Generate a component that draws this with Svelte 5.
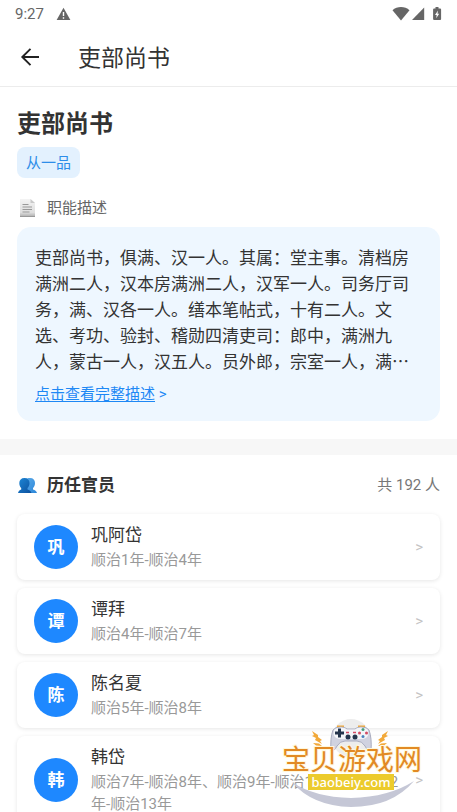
<script>
  const officials = [
    { name: '巩阿岱', term: '顺治1年-顺治4年' },
    { name: '谭拜', term: '顺治4年-顺治7年' },
    { name: '陈名夏', term: '顺治5年-顺治8年' },
    { name: '韩岱', term: '顺治7年-顺治8年、顺治9年-顺治10年、顺治12年-顺治13年' }
  ];
</script>

<div class="screen">
  <div class="status">
    <span>9:27</span>
    <svg width="15" height="14" viewBox="0 0 15 14" aria-hidden="true">
      <path d="M7.5 .8 14.4 13H.6z" fill="#666" />
      <path d="M7.5 5v4M7.5 10.3v1.5" stroke="#fff" stroke-width="1.4" />
    </svg>
    <svg class="radio" width="52" height="16" viewBox="0 0 52 16" aria-hidden="true">
      <path d="M.5 4.2C5-.2 13-.2 17.5 4.2L9 14.5z" fill="#666" />
      <path d="M32.2 1.6v12.4H20z" fill="#666" />
      <path d="M43.5 1h3v1.6h1.6q1 0 1 1V13q0 1-1 1h-6q-1 0-1-1V3.600q0-1 1-1h1.400z" fill="#666" />
      <path d="M46 4.400 43 9h1.700l-.5 3.200L47.200 7.700h-1.700z" fill="#fff" />
    </svg>
  </div>

  <header>
    <button class="back" aria-label="返回">
      <svg width="20" height="20" viewBox="0 0 20 20" fill="none" stroke="#222" stroke-width="1.9" aria-hidden="true">
        <path d="M19 10H2.500M10.500 1.800 2.300 10l8.200 8.200" />
      </svg>
    </button>
    <span class="bar-title">吏部尚书</span>
  </header>

  <main>
    <section class="office">
      <h1>吏部尚书</h1>
      <span class="rank">从一品</span>
      <h2 class="label">
        <svg width="20" height="20" viewBox="0 0 20 20" aria-hidden="true">
          <defs>
            <linearGradient id="sheet" x1="0" y1="0" x2="0" y2="1">
              <stop offset="0" stop-color="#f4f4f4" />
              <stop offset=".75" stop-color="#dedede" />
              <stop offset="1" stop-color="#aaa" />
            </linearGradient>
          </defs>
          <path d="M3 1h10.500L18 5v14H3z" fill="url(#sheet)" />
          <path d="M13.500 1v4H18z" fill="#c9c9c9" />
          <path d="M5.500 6.500h6M5.500 9h9.500M5.500 11.500h9.500M5.500 14h7" stroke="#999" />
          <path d="M3 18.500h15" stroke="#999" />
        </svg>
        职能描述
      </h2>
      <div class="summary">
        <p>吏部尚书，俱满、汉一人。其属：堂主事。清档房满洲二人，汉本房满洲二人，汉军一人。司务厅司务，满、汉各一人。缮本笔帖式，十有二人。文选、考功、验封、稽勋四清吏司：郎中，满洲九人，蒙古一人，汉五人。员外郎，宗室一人，满…</p>
        <a href="#full"><span>点击查看完整描述</span> &gt;</a>
      </div>
    </section>

    <section class="history">
      <div class="history-head">
        <h2>
          <svg width="20" height="20" viewBox="0 0 20 20" aria-hidden="true">
            <defs>
              <linearGradient id="front" x1="0" y1="0" x2="1" y2="1">
                <stop offset="0" stop-color="#1e88d8" />
                <stop offset="1" stop-color="#0c4f9c" />
              </linearGradient>
              <linearGradient id="rear" x1="0" y1="0" x2="1" y2="1">
                <stop offset="0" stop-color="#5baae8" />
                <stop offset="1" stop-color="#2b86d9" />
              </linearGradient>
            </defs>
            <path d="M13 3c3.300 0 5 2 5 5 0 2.500-1 4-2 5v1.500c2 .5 3.500 1.500 4 3.500H8V5c1-1.400 3-2 5-2z" fill="url(#rear)" />
            <path d="M7.500 3c3.200 0 5 2 5 5 0 2.500-1 4-2 5v1.500c2 .5 3.500 1.500 4 3.500H1c.5-2 1.500-3 3.200-3.500V13c-1-1-1.900-2.500-1.900-5 0-3 1.900-5 5.200-5z" fill="url(#front)" />
          </svg>
          历任官员
        </h2>
        <span class="count">共 192 人</span>
      </div>
      <ul>
        {#each officials as o}
          <li>
            <button class="card">
              <span class="avatar">{o.name[0]}</span>
              <span class="info">
                <span class="name">{o.name}</span>
                <span class="term">{o.term}</span>
              </span>
              <span class="chevron">&gt;</span>
            </button>
          </li>
        {/each}
      </ul>
    </section>
  </main>

  <svg class="brand" width="146" height="96" viewBox="0 0 146 96" role="img" aria-label="宝贝游戏网 baobeiy.com">
    <circle cx="71" cy="22" r="19" fill="#ededed" />
    <path d="M12 66Q34 81 71 82 109 81 134 65 112 91 71 91 32 90 12 66z" fill="#c5c7d6" />
    <g fill="#f2a93a">
      <path d="M32 15l6 4v2l4 3-2 1 2 3-7-4 1-2-4-2 2-1zM33 27l6 .5 3 2.500-6-.5z" />
      <path d="M108 15l-6 4v2l-4 3 2 1-2 3 7-4-1-2 4-2-2-1zM107 27l-6 .5-3 2.500 6-.5z" />
      <path d="M57 9.500h7v2h-7zM78 9.500h7v2h-7z" />
    </g>
    <path d="M53 14q2-3 8-3 4 0 6 2h8q2-2 6-2 6 0 8 3 3 8 2 21-3 1-6-5-3-5-8-5H65q-5 0-8 5-3 6-6 5-1-13 2-21z" fill="#d0d2e0" stroke="#a9acbf" />
    <path d="M54 14q2-2.500 7-2.500 4 0 6 2h8q2-2 6-2 5 0 7 2.500 2 8-5 9H59q-7-1-5-9z" fill="#f3f4f8" />
    <path d="M58 12.500h3v3h3v3h-3v3h-3v-3h-3v-3h3z" fill="#24344c" />
    <g fill="#24344c"><circle cx="68" cy="21" r="2.500" /><circle cx="75" cy="21" r="2.500" /></g>
    <path d="M66 16.500h3M73 16.500h3" stroke="#d34b64" stroke-width="1.500" />
    <g><circle cx="83" cy="13.500" r="1.500" fill="#4a9e7e" /><circle cx="83" cy="20.500" r="1.500" fill="#4a82bd" /><circle cx="79.500" cy="17" r="1.500" fill="#d34b64" /><circle cx="86.500" cy="17" r="1.500" fill="#d34b64" /></g>
    <text class="brand-cn" x="72" y="54" text-anchor="middle">宝贝游戏网</text>
    <rect x="28" y="58" width="86" height="16" fill="#eccb2c" />
    <text class="brand-url" x="71" y="71" text-anchor="middle">baobeiy.com</text>
  </svg>
</div>

<style>
  :global(body) { margin: 0; background: #fff; }
  .screen {
    position: relative;
    height: 100vh;
    overflow: hidden;
    background: #fff;
    color: #333;
    font-family: Roboto, "Noto Sans CJK SC", sans-serif;
  }
  button { font: inherit; color: inherit; border: 0; background: none; padding: 0; cursor: pointer; }
  h1, h2, p, ul { margin: 0; padding: 0; }
  svg { display: block; flex: none; }
  .status {
    display: flex;
    align-items: center;
    gap: 12px;
    height: 27px;
    padding: 0 13px 0 15px;
    font-size: 15px;
    color: #666;
  }
  .radio { margin-left: auto; }
  header {
    display: flex;
    align-items: center;
    gap: 38px;
    height: 59px;
    padding: 0 20px;
    border-bottom: 1px solid #ececec;
  }
  .bar-title { font-size: 23px; line-height: 32px; padding-top: 4px; }
  .office { padding: 20px 17px 18px; border-bottom: 16px solid #f7f7f7; }
  h1 { font-size: 24px; line-height: 34px; font-weight: 700; }
  .rank {
    display: block;
    width: fit-content;
    margin-top: 6px;
    padding: 1px 9px 0;
    border-radius: 8px;
    background: #e3f1fe;
    color: #2d8de9;
    font-size: 15px;
    line-height: 30px;
  }
  h2 { display: flex; align-items: center; gap: 10px; }
  .label { margin-top: 19px; font-size: 15px; line-height: 22px; font-weight: 400; color: #666; }
  .summary { margin-top: 8px; padding: 17px 18px 16px; border-radius: 14px; background: #eef7ff; }
  .summary p {
    font-family: "Noto Sans CJK SC", sans-serif;
    font-size: 17px;
    line-height: 26px;
  }
  .summary a {
    display: block;
    margin-top: 9px;
    font-size: 15px;
    line-height: 22px;
    color: #1e88f5;
    text-decoration: none;
  }
  .summary a span { text-decoration: underline; text-underline-offset: 2px; }
  .history { padding: 17px; }
  .history-head { display: flex; align-items: center; justify-content: space-between; height: 26px; }
  .history h2 { font-size: 17px; line-height: 26px; font-weight: 700; }
  .count { font-size: 15px; line-height: 22px; color: #777; }
  ul { display: flex; flex-direction: column; gap: 8px; margin-top: 16px; list-style: none; }
  .card {
    display: flex;
    align-items: center;
    width: 100%;
    padding: 9px 17px;
    border-radius: 8px;
    background: #fff;
    box-shadow: 0 1px 4px rgba(0, 0, 0, 0.1);
    text-align: left;
  }
  .avatar {
    flex: none;
    width: 44px;
    height: 44px;
    border-radius: 50%;
    background: #1e88ff;
    color: #fff;
    font-size: 17px;
    font-weight: 700;
    line-height: 44px;
    text-align: center;
  }
  .info { flex: 1; display: flex; flex-direction: column; gap: 2px; margin: 0 10px 0 13px; }
  .name { font-size: 17px; line-height: 24px; }
  .term { font-size: 15px; line-height: 22px; color: #999; }
  .chevron { font-size: 15px; color: #c4c4c4; }
  .brand { position: absolute; right: 31px; bottom: 0; }
  .brand-cn {
    font-family: "Noto Sans CJK SC", sans-serif;
    font-size: 28px;
    font-weight: 400;
    fill: #e28a24;
    stroke: #fff8dc;
    stroke-width: 2px;
    paint-order: stroke;
  }
  .brand-url { font-family: "Noto Sans", sans-serif; font-size: 13px; font-weight: 500; fill: #fff; }
</style>
